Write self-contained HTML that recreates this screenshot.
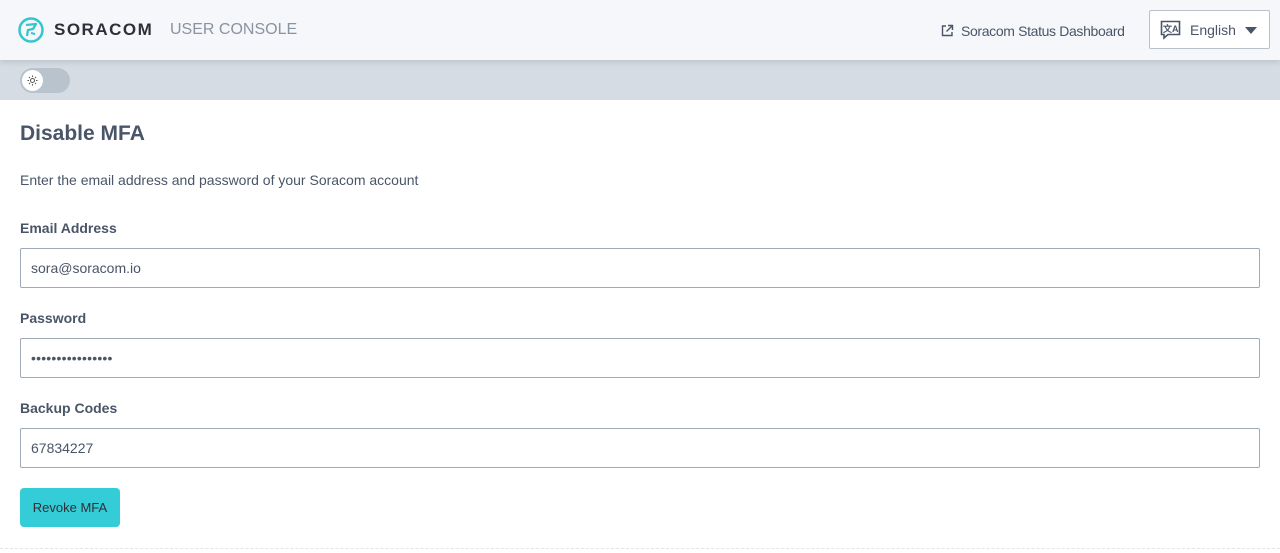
<!DOCTYPE html>
<html><head><meta charset="utf-8"><style>
*{box-sizing:border-box;margin:0;padding:0}
body{width:1280px;height:553px;background:#fff;font-family:"Liberation Sans",sans-serif;color:#4a5568;overflow:hidden;position:relative}
.hdr{position:absolute;left:0;top:0;width:1280px;height:60px;background:#f5f7fa;box-shadow:0 2px 6px rgba(0,0,0,.12);z-index:2}
.bar{position:absolute;left:0;top:60px;width:1280px;height:40px;background:#d5dce4}
.logo{position:absolute;left:18px;top:17px}
.brand{position:absolute;left:54px;top:20px;font-size:17px;font-weight:bold;letter-spacing:1.5px;color:#2d3038}
.uc{position:absolute;left:170px;top:21px;font-size:16px;color:#8a93a0}
.status{position:absolute;left:941px;top:23px;font-size:14px;color:#4a5568;letter-spacing:-0.35px}
.lang{position:absolute;left:1149px;top:10px;width:121px;height:39px;border:1px solid #b8c0ca;background:#fff;border-radius:2px}
.toggle{position:absolute;left:20px;width:50px;height:25px;border-radius:13px;background:#b9c3cd}
.knob{position:absolute;left:2px;top:2px;width:21px;height:21px;border-radius:50%;background:#fff}
h1{position:absolute;left:20px;top:122px;font-size:21px;font-weight:bold;color:#4a5568}
.p{position:absolute;left:20px;top:172px;font-size:14px;color:#4a5568}
label{position:absolute;left:20px;font-size:14px;font-weight:bold;color:#4a5568}
.in{position:absolute;left:20px;width:1240px;height:40px;border:1px solid #a0aab6;border-radius:2px;padding:0 10px;line-height:38px;font-size:14px;color:#4a5568}
.btn{position:absolute;left:20px;top:488px;width:100px;height:39px;background:#34ccd6;border-radius:4px;font-size:13px;color:#2d3038;text-align:center;line-height:39px}
.line{position:absolute;left:0;top:548px;width:1280px;border-top:1px dashed #e2e6ea}
</style></head><body>
<div class="hdr">
<svg class="logo" width="26" height="26" viewBox="0 0 26 26"><circle cx="13" cy="13" r="11.5" fill="none" stroke="#34c5d0" stroke-width="2.5"/><path d="M8 8 L18 7 L15 12 L10 13 L9 19" fill="none" stroke="#34c5d0" stroke-width="2.3" stroke-linejoin="round"/><path d="M13 16 l4 1" stroke="#34c5d0" stroke-width="2"/></svg>
<div class="brand">SORACOM</div>
<div class="uc">USER CONSOLE</div>
<div class="status"><svg width="13" height="13" viewBox="0 0 13 13" style="vertical-align:-1px;margin-right:7px"><path d="M5 2H1.5V11.5H11V8M7 1.5H11.5V6M11.5 1.5L5.5 7.5" fill="none" stroke="#4a5568" stroke-width="1.4"/></svg>Soracom Status Dashboard</div>
<div class="lang">
<svg style="position:absolute;left:10px;top:9px" width="21" height="20" viewBox="0 0 21 20"><path d="M1.5 1.5H19.5V14.5H8L4 18V14.5H1.5Z" fill="none" stroke="#4a5568" stroke-width="1.6"/><text x="3" y="12" font-size="9" font-weight="bold" fill="#4a5568" font-family="Liberation Sans">文A</text></svg>
<span style="position:absolute;left:40px;top:11px;font-size:14px;color:#4a5568">English</span>
<span style="position:absolute;left:95px;top:16px;border-left:6px solid transparent;border-right:6px solid transparent;border-top:7px solid #4a5568"></span>
</div>
</div>
<div class="bar"><div class="toggle" style="top:8px"><div class="knob"><svg width="21" height="21" viewBox="0 0 21 21"><circle cx="10.5" cy="10.5" r="2" fill="none" stroke="#555" stroke-width="1"/><path d="M10.5 5.5v1.5M10.5 14v1.5M5.5 10.5h1.5M14 10.5h1.5M7 7l1 1M13 13l1 1M14 7l-1 1M7 14l1-1" stroke="#555" stroke-width="1"/></svg></div></div></div>
<h1>Disable MFA</h1>
<div class="p">Enter the email address and password of your Soracom account</div>
<label style="top:220px">Email Address</label>
<div class="in" style="top:248px">sora@soracom.io</div>
<label style="top:310px">Password</label>
<div class="in" style="top:338px;letter-spacing:0.2px">••••••••••••••••</div>
<label style="top:400px">Backup Codes</label>
<div class="in" style="top:428px">67834227</div>
<div class="btn">Revoke MFA</div>
<div class="line"></div>
</body></html>
